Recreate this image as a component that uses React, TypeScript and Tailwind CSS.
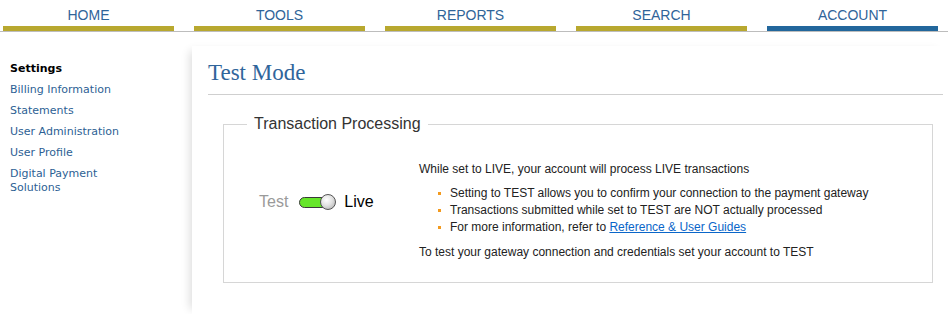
import React from 'react';

const tabs = [
  { label: 'HOME', active: false },
  { label: 'TOOLS', active: false },
  { label: 'REPORTS', active: false },
  { label: 'SEARCH', active: false },
  { label: 'ACCOUNT', active: true },
];

const sideLinks = ['Billing Information', 'Statements', 'User Administration', 'User Profile'];

const Toggle: React.FC = () => (
  <div className="relative w-[37px] h-[16px] flex items-center">
    <div className="w-[33px] h-[11px] rounded-full bg-[#66e62a] border border-[#3a3a3a]" />
    <div className="absolute right-0 top-0 w-[16px] h-[16px] rounded-full border border-[#555] bg-[radial-gradient(circle_at_40%_35%,#ffffff_0%,#e2e2e2_45%,#a9a9a9_100%)]" />
  </div>
);

export default function App() {
  return (
    <div className="w-[948px] h-[314px] bg-white overflow-hidden font-['Liberation_Sans',Arial,sans-serif]">
      {/* top nav */}
      <nav className="h-[32px] border-b border-[#bdbdbd] flex pl-[3px] gap-[20px]">
        {tabs.map((t) => (
          <div key={t.label} className="w-[171px] flex flex-col">
            <div className="h-[26px] pt-[7px] text-center text-[14px] leading-[16px] text-[#2f6499]">{t.label}</div>
            <div className={`h-[5px] ${t.active ? 'bg-[#22679c]' : 'bg-[#b8a82f]'}`} />
          </div>
        ))}
      </nav>

      <div className="flex mt-[14px] h-[268px]">
        {/* sidebar */}
        <aside className="w-[192px] shrink-0 pl-[10px] pt-[16px] font-['DejaVu_Sans',Verdana,sans-serif] text-[11px] leading-[14px]">
          <div className="font-bold text-black">Settings</div>
          <ul className="mt-[7px] flex flex-col gap-[7px] text-[#2d5f94]">
            {sideLinks.map((l) => (
              <li key={l}>{l}</li>
            ))}
            <li>
              Digital Payment
              <br />
              Solutions
            </li>
          </ul>
        </aside>

        {/* main */}
        <main className="flex-1 pl-[16px] pr-[5px] shadow-[-7px_0_9px_-5px_rgba(0,0,0,0.14)]">
          <h1 className="pt-[13px] pb-[8px] border-b border-[#cfcfcf] font-['Liberation_Serif',Georgia,serif] text-[23px] leading-[27px] text-[#30659b]">
            Test Mode
          </h1>

          <fieldset className="mt-[20px] ml-[15px] w-[710px] border border-[#d6d6d6] pb-[21px]">
            <legend className="ml-[23px] px-[7px] text-[16px] leading-[18px] text-[#333]">Transaction Processing</legend>

            <div className="flex items-center pt-[28px]">
              <div className="w-[195px] shrink-0 pl-[35px] mb-[18px] flex items-center text-[16px] leading-[18px]">
                <span className="text-[#9a9a9a]">Test</span>
                <span className="ml-[11px]"><Toggle /></span>
                <span className="ml-[8px] text-black">Live</span>
              </div>

              <div className="text-[12px] leading-[17px] text-[#222]">
                <p>While set to LIVE, your account will process LIVE transactions</p>
                <ul className="mt-[7px] pl-[19px]">
                  <li className="flex items-center">
                    <span className="w-[3px] h-[3px] bg-[#f39a1e] mr-[9px]" />
                    Setting to TEST allows you to confirm your connection to the payment gateway
                  </li>
                  <li className="flex items-center">
                    <span className="w-[3px] h-[3px] bg-[#f39a1e] mr-[9px]" />
                    Transactions submitted while set to TEST are NOT actually processed
                  </li>
                  <li className="flex items-center">
                    <span className="w-[3px] h-[3px] bg-[#f39a1e] mr-[9px]" />
                    For more information, refer to&nbsp;
                    <a href="#" className="text-[#0a66c9] underline">Reference &amp; User Guides</a>
                  </li>
                </ul>
                <p className="mt-[8px]">To test your gateway connection and credentials set your account to TEST</p>
              </div>
            </div>
          </fieldset>
        </main>
      </div>
    </div>
  );
}
